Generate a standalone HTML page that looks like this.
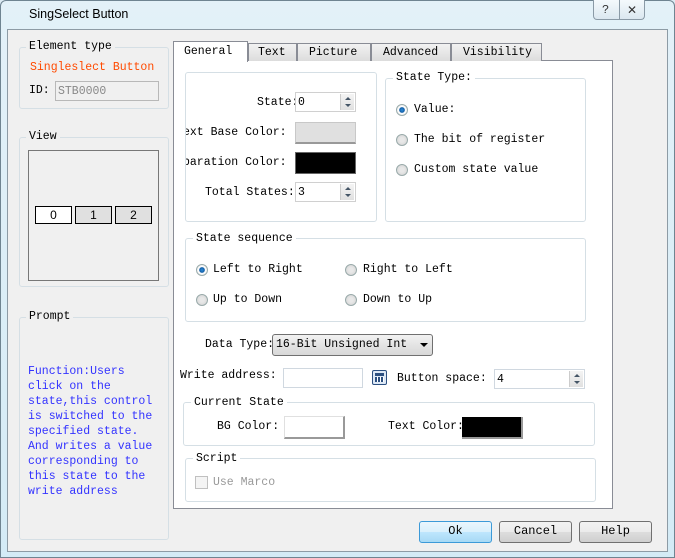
<!DOCTYPE html>
<html><head><meta charset="utf-8"><style>
*{box-sizing:border-box;margin:0;padding:0}
body{width:675px;height:558px;overflow:hidden;background:#dcebf3;font-family:"Liberation Mono","Noto Sans CJK SC",monospace;font-size:11.5px;color:#000;position:relative}
.a{position:absolute}
.t{position:absolute;white-space:nowrap;line-height:14px}
.grp{position:absolute;border:1px solid #d5dfe5;border-radius:3px}
.lg{position:absolute;background:#f0f0f0;padding:0 3px;white-space:nowrap;line-height:14px}
.lgw{background:#fff}
.rad{position:absolute;width:12px;height:12px;border-radius:50%;border:1px solid #9aa;background:radial-gradient(circle,#e8e8e8 30%,#d0d0d0 100%)}
.rad.on{background:radial-gradient(circle,#2a8ad8 0,#1660a8 35%,#fff 45%,#e0e0e0 100%)}
.inp{position:absolute;background:#fff;border:1px solid #abadb3}
.spin{position:absolute;right:1px;top:1px;bottom:1px;width:14px;border-left:1px solid #ccc;background:linear-gradient(#f4f4f4,#e0e0e0)}
.spin:before{content:"";position:absolute;left:4px;top:3px;border:3px solid transparent;border-bottom:3px solid #456;border-top:0}
.spin:after{content:"";position:absolute;left:4px;bottom:3px;border:3px solid transparent;border-top:3px solid #456;border-bottom:0}
.btn{position:absolute;border:1px solid #707070;border-radius:3px;background:linear-gradient(#f2f2f2,#ebebeb 50%,#dddddd 51%,#cfcfcf);text-align:center;line-height:19px;font-size:12px}
</style></head><body>
<!-- window frame -->
<div class="a" style="left:0;top:0;width:675px;height:558px;border:1px solid #6f8491;border-radius:6px 6px 0 0;background:linear-gradient(#e3f1f8,#d4ebf6)"></div>
<div class="t" style="left:29px;top:7px;font-family:'Liberation Sans',sans-serif;font-size:12.5px">SingSelect Button</div>
<div class="a" style="left:593px;top:0;width:52px;height:20px;border:1px solid #8a9aa6;border-top:0;border-radius:0 0 4px 4px;background:linear-gradient(#f4f9fc,#dbe8f0)"></div>
<div class="a" style="left:619px;top:0;width:1px;height:19px;background:#8a9aa6"></div>
<div class="t" style="left:602px;top:3px;font-size:12px;color:#333">?</div>
<div class="t" style="left:627px;top:3px;font-size:12px;color:#333;font-family:'Liberation Sans',sans-serif">✕</div>
<div class="a" style="left:7px;top:29px;width:661px;height:523px;background:#f0f0f0;border:1px solid #8d9ba5"></div>

<!-- left -->
<div class="grp" style="left:19px;top:47px;width:150px;height:62px"></div>
<div class="lg" style="left:26px;top:40px">Element type</div>
<div class="t" style="left:30px;top:61px;color:#ff4a00">Singleslect Button</div>
<div class="t" style="left:29px;top:84px">ID:</div>
<div class="inp" style="left:55px;top:81px;width:104px;height:20px;background:#f0f0f0;border-color:#b8b8b8"></div>
<div class="t" style="left:58px;top:85px;color:#888">STB0000</div>

<div class="grp" style="left:19px;top:137px;width:150px;height:150px"></div>
<div class="lg" style="left:26px;top:130px">View</div>
<div class="a" style="left:28px;top:150px;width:131px;height:131px;border:1px solid #777;background:#f0f0f0"></div>
<div class="a" style="left:35px;top:206px;width:37px;height:18px;border:1px solid #000;background:#fff;text-align:center;font-family:'Liberation Sans',sans-serif;font-size:12px;line-height:16px">0</div>
<div class="a" style="left:75px;top:206px;width:37px;height:18px;border:1px solid #000;background:#e0e0e0;text-align:center;font-family:'Liberation Sans',sans-serif;font-size:12px;line-height:16px">1</div>
<div class="a" style="left:115px;top:206px;width:37px;height:18px;border:1px solid #000;background:#e0e0e0;text-align:center;font-family:'Liberation Sans',sans-serif;font-size:12px;line-height:16px">2</div>

<div class="grp" style="left:19px;top:317px;width:150px;height:223px"></div>
<div class="lg" style="left:26px;top:310px">Prompt</div>
<div class="t" style="left:28px;top:364px;color:#3333ff;line-height:15px;white-space:pre">Function:Users
click on the
state,this control
is switched to the
specified state.
And writes a value
corresponding to
this state to the
write address</div>

<!-- tabs -->
<div class="a" style="left:173px;top:60px;width:440px;height:449px;background:#fff;border:1px solid #898c95"></div>
<div class="a" style="left:173px;top:41px;width:75px;height:21px;background:#fff;border:1px solid #898c95;border-bottom:0"></div>
<div class="t" style="left:184px;top:45px">General</div>
<div class="a" style="left:248px;top:43px;width:49px;height:18px;border:1px solid #898c95;border-bottom:0;background:linear-gradient(#f2f2f2,#dcdcdc)"></div><div class="t" style="left:258px;top:46px">Text</div>
<div class="a" style="left:297px;top:43px;width:74px;height:18px;border:1px solid #898c95;border-bottom:0;background:linear-gradient(#f2f2f2,#dcdcdc)"></div><div class="t" style="left:309px;top:46px">Picture</div>
<div class="a" style="left:371px;top:43px;width:80px;height:18px;border:1px solid #898c95;border-bottom:0;background:linear-gradient(#f2f2f2,#dcdcdc)"></div><div class="t" style="left:383px;top:46px">Advanced</div>
<div class="a" style="left:451px;top:43px;width:91px;height:18px;border:1px solid #898c95;border-bottom:0;background:linear-gradient(#f2f2f2,#dcdcdc)"></div><div class="t" style="left:463px;top:46px">Visibility</div>

<!-- box1 -->
<div class="grp" style="left:185px;top:72px;width:192px;height:150px;overflow:hidden">
 <div class="t" style="left:71px;top:23px">State:</div>
 <div class="t" style="left:-3px;top:53px">ext Base Color:</div>
 <div class="t" style="left:-3px;top:83px">paration Color:</div>
 <div class="t" style="left:19px;top:113px">Total States:</div>
</div>
<div class="inp" style="left:295px;top:92px;width:61px;height:20px;border-color:#d0d0d0"><div class="spin"></div></div>
<div class="t" style="left:298px;top:96px">0</div>
<div class="a" style="left:295px;top:122px;width:61px;height:22px;background:#e0e0e0;border:1px solid #c8c8c8;border-bottom:2px solid #999"></div>
<div class="a" style="left:295px;top:152px;width:61px;height:22px;background:#000;border:1px solid #666"></div>
<div class="inp" style="left:295px;top:182px;width:61px;height:20px;border-color:#d0d0d0"><div class="spin"></div></div>
<div class="t" style="left:298px;top:186px">3</div>

<!-- state type -->
<div class="grp" style="left:385px;top:78px;width:201px;height:144px"></div>
<div class="lg lgw" style="left:393px;top:71px">State Type:</div>
<div class="rad on" style="left:396px;top:104px"></div><div class="t" style="left:414px;top:103px">Value:</div>
<div class="rad" style="left:396px;top:134px"></div><div class="t" style="left:414px;top:133px">The bit of register</div>
<div class="rad" style="left:396px;top:164px"></div><div class="t" style="left:414px;top:163px">Custom state value</div>

<!-- state sequence -->
<div class="grp" style="left:185px;top:238px;width:401px;height:84px"></div>
<div class="lg lgw" style="left:193px;top:232px">State sequence</div>
<div class="rad on" style="left:196px;top:264px"></div><div class="t" style="left:213px;top:263px">Left to Right</div>
<div class="rad" style="left:345px;top:264px"></div><div class="t" style="left:363px;top:263px">Right to Left</div>
<div class="rad" style="left:196px;top:294px"></div><div class="t" style="left:213px;top:293px">Up to Down</div>
<div class="rad" style="left:345px;top:294px"></div><div class="t" style="left:363px;top:293px">Down to Up</div>

<!-- data type -->
<div class="t" style="left:205px;top:338px">Data Type:</div>
<div class="a" style="left:272px;top:334px;width:161px;height:22px;border:1px solid #707070;border-radius:3px;background:linear-gradient(#f2f2f2,#e4e4e4 50%,#d8d8d8)"></div>
<div class="t" style="left:276px;top:338px">16-Bit Unsigned Int</div>
<div class="a" style="left:420px;top:343px;border:4px solid transparent;border-top:4px solid #000;border-bottom:0"></div>

<div class="t" style="left:180px;top:369px">Write address:</div>
<div class="inp" style="left:283px;top:368px;width:80px;height:20px;border-color:#d0d8e0"></div>
<div class="a" style="left:372px;top:370px;width:15px;height:15px;border:1px solid #2c4f80;border-radius:2px;background:#dde8f5"><div style="margin:2px 2px 0;height:3px;background:#2c4f80"></div><div style="margin:1px 2px;height:5px;background:repeating-linear-gradient(90deg,#2c4f80 0 2px,#fff 2px 3px)"></div></div>
<div class="t" style="left:397px;top:372px">Button space:</div>
<div class="inp" style="left:494px;top:369px;width:91px;height:20px;border-color:#d0d8e0"><div class="spin"></div></div>
<div class="t" style="left:497px;top:373px">4</div>

<!-- current state -->
<div class="grp" style="left:183px;top:402px;width:412px;height:44px"></div>
<div class="lg lgw" style="left:191px;top:396px">Current State</div>
<div class="t" style="left:217px;top:420px">BG Color:</div>
<div class="a" style="left:284px;top:416px;width:61px;height:23px;background:#fff;border:1px solid #e0e0e0;border-right:2px solid #999;border-bottom:2px solid #999"></div>
<div class="t" style="left:388px;top:420px">Text Color:</div>
<div class="a" style="left:462px;top:417px;width:61px;height:22px;background:#000;border-right:2px solid #999;border-bottom:2px solid #999"></div>

<!-- script -->
<div class="grp" style="left:185px;top:458px;width:411px;height:44px"></div>
<div class="lg lgw" style="left:193px;top:452px">Script</div>
<div class="a" style="left:195px;top:476px;width:13px;height:13px;border:1px solid #c0c0c0;background:#f4f4f4"></div>
<div class="t" style="left:213px;top:476px;color:#999">Use Marco</div>

<!-- buttons -->
<div class="btn" style="left:419px;top:521px;width:73px;height:22px;border-color:#3c9ad8;background:linear-gradient(#eaf6fd,#d9f0fc 50%,#bee6fd 51%,#a7d9f5)">Ok</div>
<div class="btn" style="left:499px;top:521px;width:73px;height:22px">Cancel</div>
<div class="btn" style="left:579px;top:521px;width:73px;height:22px">Help</div>
</body></html>
